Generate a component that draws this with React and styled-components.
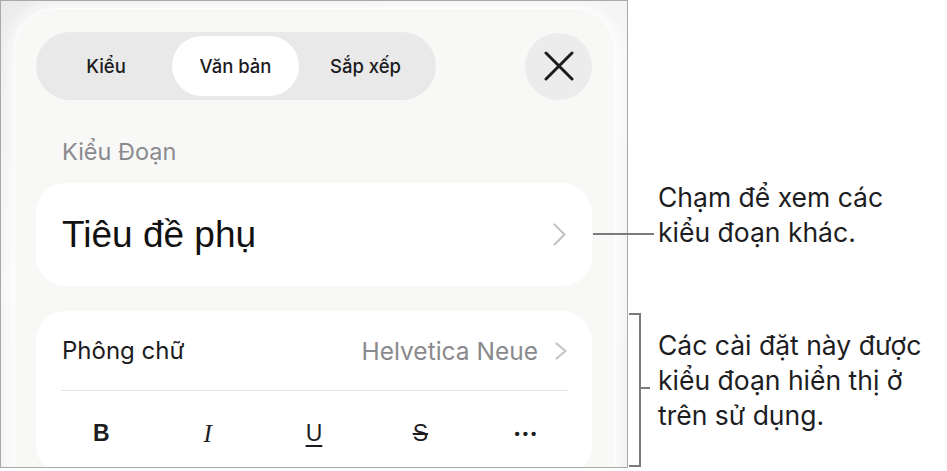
import React from 'react';
import styled, {createGlobalStyle} from 'styled-components';

const GlobalStyle = createGlobalStyle`
    html, body {
        margin: 0;
        padding: 0;
        background: #ffffff;
    }
    body {
        font-family: Inter, "Noto Sans", sans-serif;
        color: #1d1d1f;
    }
`;

const Figure = styled.div`
    display: flex;
    width: 947px;
    height: 471px;
    overflow: hidden;
`;

const Frame = styled.div`
    box-sizing: border-box;
    width: 628px;
    height: 468px;
    flex-shrink: 0;
    border: 1px solid #a9a9a9;
    background: linear-gradient(160deg, #ebebeb 0%, #f6f6f6 40%, #f1f1f1 100%);
    padding: 7px 0 0 13px;
    overflow: hidden;
`;

const Sheet = styled.div`
    box-sizing: border-box;
    width: 601px;
    min-height: 520px;
    background: #f8f8f7;
    border: 1.5px solid #ffffff;
    border-radius: 42px 42px 0 0;
    box-shadow: 0 0 16px 4px rgba(255, 255, 255, 0.9);
    padding: 23px 22px 0 21px;
`;

const Header = styled.div`
    display: flex;
    align-items: center;
    justify-content: space-between;
`;

const Segmented = styled.div`
    display: flex;
    height: 68px;
    padding: 4px;
    box-sizing: border-box;
    border-radius: 34px;
    background: #e9e9e9;
`;

const Tab = styled.div`
    width: ${p => p.$w}px;
    display: flex;
    align-items: center;
    justify-content: center;
    border-radius: 30px;
    font-size: 18.5px;
    font-weight: 500;
    color: #1c1c1e;
    background: ${p => (p.$active ? '#ffffff' : 'transparent')};
`;

const CloseButton = styled.div`
    width: 67px;
    height: 67px;
    border-radius: 50%;
    background: #ececec;
    display: flex;
    align-items: center;
    justify-content: center;
`;

const SectionLabel = styled.div`
    margin: 38px 0 17px 26px;
    font-size: 23.5px;
    line-height: 28px;
    color: #8a8a8e;
`;

const Card = styled.div`
    background: #ffffff;
    border-radius: 30px;
    margin-bottom: 25px;
`;

const StyleRow = styled.div`
    height: 103px;
    display: flex;
    align-items: center;
    justify-content: space-between;
    padding: 0 26px;
`;

const BigTitle = styled.div`
    font-family: "Liberation Sans", Arial, sans-serif;
    font-size: 37px;
    color: #111111;
`;

const Group = styled.div`
    padding: 0 24px 0 25px;
`;

const ValueRow = styled.div`
    height: 80px;
    display: flex;
    align-items: center;
    justify-content: space-between;
    border-bottom: 1.5px solid #e4e4e4;
    box-sizing: border-box;
    padding: 0 1px 0 1px;
`;

const RowLabel = styled.div`
    font-size: 24px;
    color: #1c1c1e;
`;

const RowValue = styled.div`
    display: flex;
    align-items: center;
    gap: 17px;
    font-size: 24.5px;
    color: #8a8a8e;
`;

const Toolbar = styled.div`
    display: grid;
    grid-template-columns: repeat(5, 1fr);
    height: 84px;
    margin: 0 -12px 0 -13px;
    align-items: center;
    justify-items: center;
`;

const ToolGlyph = styled.span`
    font-family: ${p => (p.$serif ? '"Liberation Serif", serif' : '"Liberation Sans", Arial, sans-serif')};
    font-size: ${p => p.$size || 23}px;
    font-weight: ${p => (p.$bold ? 700 : 400)};
    font-style: ${p => (p.$italic ? 'italic' : 'normal')};
    letter-spacing: ${p => p.$spacing || 0}px;
    text-decoration: ${p => p.$deco || 'none'};
    text-decoration-thickness: 1.5px;
    text-underline-offset: 4px;
    color: #1c1c1e;
    line-height: 1;
`;

const Notes = styled.div`
    display: flex;
    flex-direction: column;
    gap: 78px;
    padding: 180px 0 0 30px;
`;

const Note = styled.div`
    position: relative;
    font-size: 26.5px;
    line-height: 35px;
    color: #1d1d1f;

    &::before {
        content: '';
        position: absolute;
        left: -65px;
        top: 53px;
        width: 61px;
        height: 2px;
        background: #7b7b7b;
    }
`;

const BracketNote = styled.div`
    position: relative;
    font-size: 26.5px;
    line-height: 35px;
    color: #1d1d1f;

    &::before {
        content: '';
        position: absolute;
        left: -29px;
        top: -15px;
        width: 10px;
        height: 150px;
        border: 2px solid #7b7b7b;
        border-left: none;
    }

    &::after {
        content: '';
        position: absolute;
        left: -18px;
        top: 59px;
        width: 10px;
        height: 2px;
        background: #7b7b7b;
    }
`;

const Chevron = ({w, h, color}) => (
    <svg width={w} height={h} viewBox={`0 0 ${w} ${h}`} fill="none">
        <path d={`M1.5 1.5 L${w - 1.5} ${h / 2} L1.5 ${h - 1.5}`} stroke={color} strokeWidth="2.2"
              strokeLinecap="round" strokeLinejoin="round"/>
    </svg>
);

const CloseIcon = () => (
    <svg width="30" height="30" viewBox="0 0 30 30" fill="none">
        <path d="M2 2 L28 28 M28 2 L2 28" stroke="#1c1c1c" strokeWidth="3" strokeLinecap="round"/>
    </svg>
);

const tabs = [
    {label: 'Kiểu', w: 132},
    {label: 'Văn bản', w: 127, active: true},
    {label: 'Sắp xếp', w: 133},
];

export default function App() {
    return (
        <>
            <GlobalStyle/>
            <Figure>
                <Frame>
                    <Sheet>
                        <Header>
                            <Segmented>
                                {tabs.map(t => (
                                    <Tab key={t.label} $w={t.w} $active={t.active}>{t.label}</Tab>
                                ))}
                            </Segmented>
                            <CloseButton><CloseIcon/></CloseButton>
                        </Header>
                        <SectionLabel>Kiểu Đoạn</SectionLabel>
                        <Card>
                            <StyleRow>
                                <BigTitle>Tiêu đề phụ</BigTitle>
                                <Chevron w={13} h={23} color="#c4c4c6"/>
                            </StyleRow>
                        </Card>
                        <Card>
                            <Group>
                                <ValueRow>
                                    <RowLabel>Phông chữ</RowLabel>
                                    <RowValue>
                                        Helvetica Neue
                                        <Chevron w={12} h={18} color="#c4c4c6"/>
                                    </RowValue>
                                </ValueRow>
                                <Toolbar>
                                    <ToolGlyph $bold>B</ToolGlyph>
                                    <ToolGlyph $serif $italic $size={25}>I</ToolGlyph>
                                    <ToolGlyph $deco="underline">U</ToolGlyph>
                                    <ToolGlyph $deco="line-through">S</ToolGlyph>
                                    <ToolGlyph $bold $size={15} $spacing={3}>•••</ToolGlyph>
                                </Toolbar>
                            </Group>
                        </Card>
                    </Sheet>
                </Frame>
                <Notes>
                    <Note>Chạm để xem các<br/>kiểu đoạn khác.</Note>
                    <BracketNote>Các cài đặt này được<br/>kiểu đoạn hiển thị ở<br/>trên sử dụng.</BracketNote>
                </Notes>
            </Figure>
        </>
    );
}
